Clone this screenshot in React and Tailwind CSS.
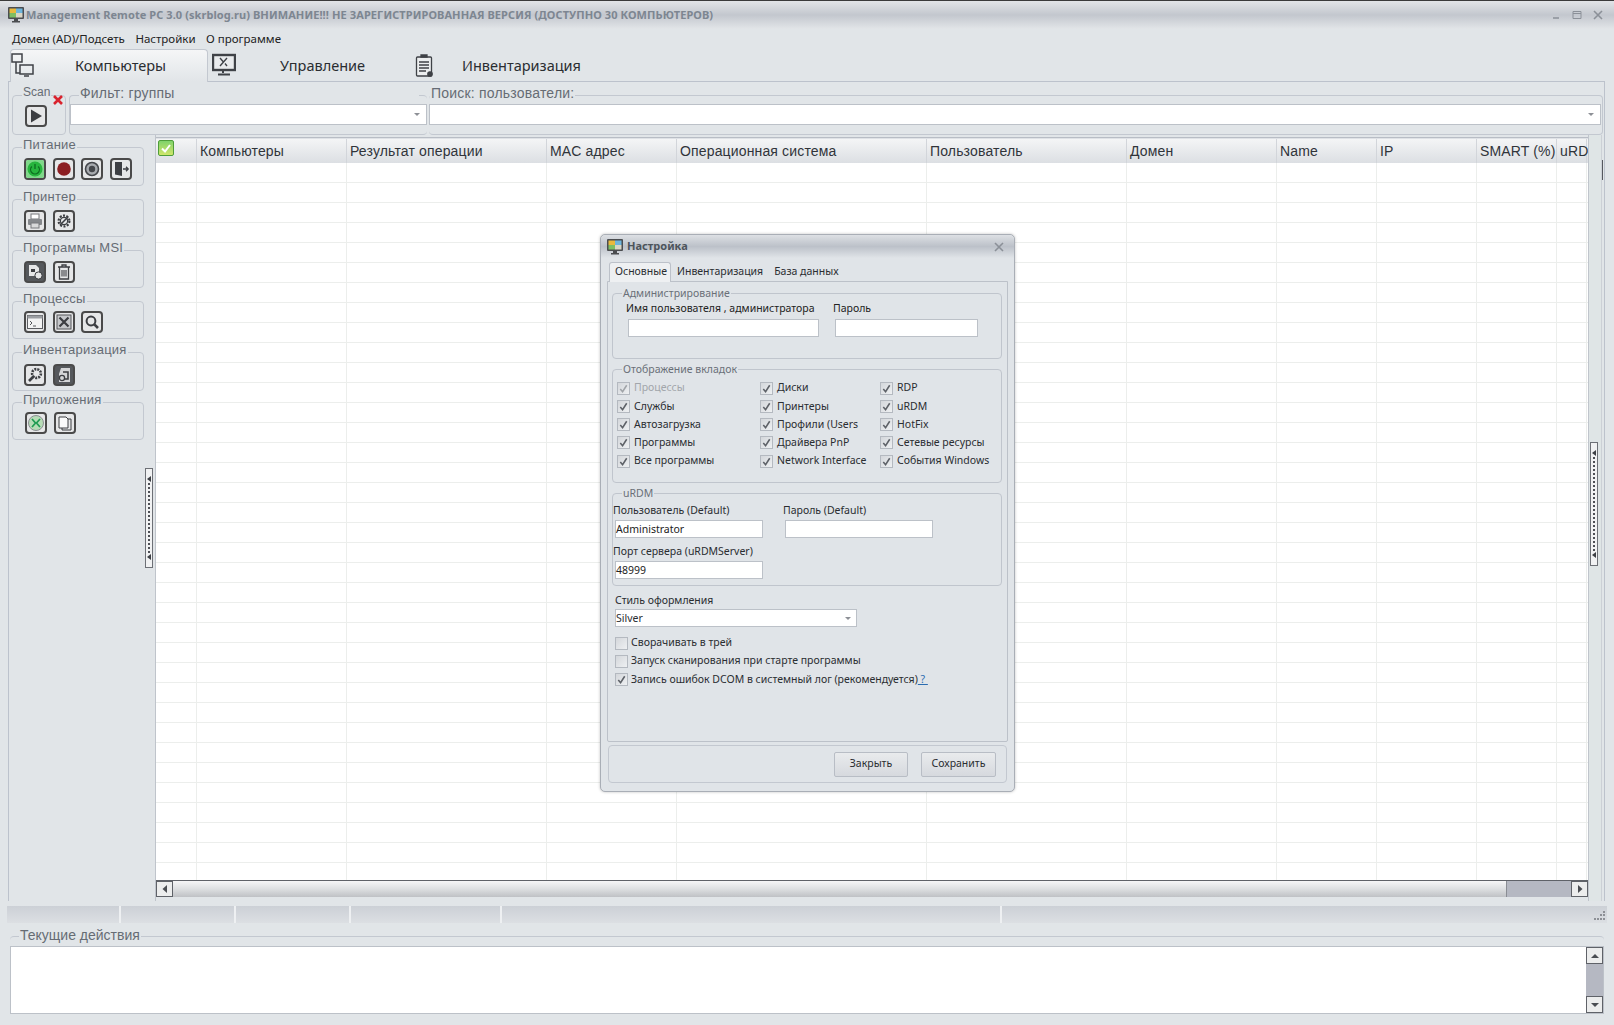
import React from 'react';

const columns = [
  { title: '', width: 'w-[41px]' },
  { title: 'Компьютеры', width: 'w-[150px]' },
  { title: 'Результат операции', width: 'w-[200px]' },
  { title: 'MAC адрес', width: 'w-[130px]' },
  { title: 'Операционная система', width: 'w-[250px]' },
  { title: 'Пользователь', width: 'w-[200px]' },
  { title: 'Домен', width: 'w-[150px]' },
  { title: 'Name', width: 'w-[100px]' },
  { title: 'IP', width: 'w-[100px]' },
  { title: 'SMART (%)', width: 'w-[80px]' },
  { title: 'uRD', width: 'w-[30px]' },
];

const rows = Array.from({ length: 36 }, (_, i) => i);

const tabChecks = [
  ['Процессы', true], ['Диски'], ['RDP'],
  ['Службы'], ['Принтеры'], ['uRDM'],
  ['Автозагрузка'], ['Профили (Users'], ['HotFix'],
  ['Программы'], ['Драйвера PnP'], ['Сетевые ресурсы'],
  ['Все программы'], ['Network Interface'], ['События Windows'],
];

const Group = ({ label, className = '', legendClass = 'text-[14px] tracking-[0.2px] leading-[12px]', children }) => (
  <fieldset className={`min-w-0 rounded-[4px] border border-[#c3c8d0] ${className}`}>
    <legend className={`ml-[9px] px-[1px] h-4 text-[#666c74] font-['Liberation_Sans',sans-serif] ${legendClass}`}>
      {label}
    </legend>
    {children}
  </fieldset>
);

const SideGroup = ({ label, className = '', padding = 'pl-[11px] pt-[3px]', children }) => (
  <Group label={label} className={`shrink-0 ${className}`} legendClass="text-[13px] tracking-[0.25px] leading-[12px]">
    <div className={`flex gap-[6.5px] ${padding}`}>{children}</div>
  </Group>
);

const DialogGroup = ({ label, className = '', children }) => (
  <fieldset className={`min-w-0 rounded-[4px] border border-[#c0c5cd] ${className}`}>
    <legend className="ml-[9px] px-[1px] h-[14px] leading-[14px] text-[10.5px] text-[#6a7078]">{label}</legend>
    {children}
  </fieldset>
);

const ToolButton = ({ children, dark }) => (
  <button className={`w-[22px] h-[22px] shrink-0 rounded-[4px] border-2 border-[#4a4a4a] flex items-center justify-center overflow-hidden ${dark ? 'bg-[#55585c]' : 'bg-[#e6e7e8]'}`}>
    <svg viewBox="0 0 18 18" className="w-[18px] h-[18px]">{children}</svg>
  </button>
);

const Field = ({ value, className = '' }) => (
  <div className={`h-[18px] bg-white border border-[#bcc1c8] text-[10.5px] leading-4 text-[#222] ${className}`}>{value}</div>
);

const Arrow = () => <div className="w-0 h-0 border-x-[3px] border-x-transparent border-t-[3px] border-t-[#8d9096]" />;

const Check = ({ checked = true, disabled }) => (
  <span className="w-[13px] h-[13px] shrink-0 border border-[#b4b9c0] bg-gradient-to-br from-[#d4d7db] to-[#eef0f2] flex items-center justify-center">
    {checked && (
      <svg viewBox="0 0 12 12" className="w-[11px] h-[11px]">
        <path d="M2.5 6.5 L5 9.5 L9.5 2.5" fill="none" stroke={disabled ? '#a0a4a8' : '#5d6167'} strokeWidth="1.7" />
      </svg>
    )}
  </span>
);

const ScrollArrow = ({ d, className = '' }) => (
  <div className={`bg-[#eceded] border border-[#5f6268] flex items-center justify-center shrink-0 ${className}`}>
    <svg viewBox="0 0 10 10" className="w-[10px] h-[10px]"><path d={d} fill="#4a4d52" /></svg>
  </div>
);

const MonitorIcon = () => (
  <svg viewBox="0 0 18 18" className="w-[18px] h-[18px] shrink-0">
    <rect x="1" y="1" width="16" height="12" rx="1" fill="#4b4d50" />
    <rect x="2.5" y="2.5" width="6.5" height="4.5" fill="#e8b93c" />
    <rect x="9" y="2.5" width="6.5" height="4.5" fill="#6fb5dc" />
    <rect x="2.5" y="7" width="6.5" height="4.5" fill="#7fbf62" />
    <rect x="9" y="7" width="6.5" height="4.5" fill="#d9d6c6" />
    <path d="M7 13h4v2h2v1.5H5V15h2z" fill="#4b4d50" />
  </svg>
);

const Splitter = ({ className = '' }) => (
  <div className={`w-2 h-[100px] border border-[#6d7076] bg-[#f1f2f3] flex flex-col items-center justify-between py-[7px] ${className}`}>
    <div className="w-0 h-0 border-y-[3px] border-y-transparent border-r-[4px] border-r-[#3c3f44]" />
    <div className="flex-1 my-[1px] border-l-2 border-dotted border-[#4d4f55]" />
    <div className="w-0 h-0 border-y-[3px] border-y-transparent border-r-[4px] border-r-[#3c3f44]" />
  </div>
);

const SettingsDialog = () => (
  <div className="absolute left-[600px] top-[233px] w-[415px] h-[558px] rounded-[5px] border border-[#a9aeb6] bg-[#e0e4e8] shadow-[0_0_3px_rgba(0,0,0,0.25)] flex flex-col">
    <div className="h-[23px] shrink-0 rounded-t-[5px] bg-gradient-to-b from-[#dde0e4] via-[#bcc1c9] to-[#e0e4e8] flex items-center pl-[5px] pr-[10px] gap-[3px]">
      <MonitorIcon />
      <span className="text-[11px] font-bold text-[#4d545c]">Настройка</span>
      <svg viewBox="0 0 10 10" className="w-[10px] h-[10px] ml-auto">
        <path d="M1 1l8 8M9 1l-8 8" stroke="#8b9098" strokeWidth="1.6" />
      </svg>
    </div>
    <div className="flex items-end pl-[8px] mt-[4px] h-[19px] shrink-0 text-[10.5px] text-[#2a2d31]">
      <span className="h-[20px] w-[62px] -mb-[1px] z-10 pl-[5px] pt-[1px] rounded-t-[3px] border border-b-0 border-[#bcc1c9] bg-[#eef0f2]">Основные</span>
      <span className="ml-[6px] pb-[1px]">Инвентаризация</span>
      <span className="ml-[11px] pb-[1px]">База данных</span>
    </div>
    <div className="mx-[6px] h-[461px] shrink-0 border border-[#bcc1c9] rounded-b-[2px] px-[4px] pt-[4px] flex flex-col text-[10.5px] text-[#2a2d31]">
      <DialogGroup label="Администрирование" className="h-[73px] shrink-0 w-[390px]">
        <div className="flex pl-[13px] h-4 leading-4 text-[#222]">
          <span className="w-[207px]">Имя пользователя , администратора</span>
          <span>Пароль</span>
        </div>
        <div className="flex pl-[15px] mt-[3px]">
          <Field className="w-[191px]" />
          <Field className="w-[143px] ml-[16px]" />
        </div>
      </DialogGroup>
      <DialogGroup label="Отображение вкладок" className="h-[121px] shrink-0 w-[390px] mt-[3px]">
        <div className="grid grid-cols-[143px_120px_1fr] auto-rows-[18.25px] pl-[4px] pt-[3px]">
          {tabChecks.map(([name, disabled]) => (
            <label key={name} className={`flex items-center gap-[4px] ${disabled ? 'text-[#a2a6ab]' : ''}`}>
              <Check disabled={disabled} />
              {name}
            </label>
          ))}
        </div>
      </DialogGroup>
      <DialogGroup label="uRDM" className="h-[100px] shrink-0 w-[390px] mt-[3px]">
        <div className="flex h-4 leading-4 mt-[2px]">
          <span className="w-[170px]">Пользователь (Default)</span>
          <span>Пароль (Default)</span>
        </div>
        <div className="flex pl-[2px] mt-[2px]">
          <Field value="Administrator" className="w-[148px]" />
          <Field className="w-[148px] ml-[22px]" />
        </div>
        <div className="h-4 leading-4 mt-[5px]">Порт сервера (uRDMServer)</div>
        <Field value="48999" className="w-[148px] ml-[2px] mt-[2px]" />
      </DialogGroup>
      <div className="h-4 leading-4 mt-[6px] ml-[3px]">Стиль оформления</div>
      <div className="w-[242px] h-[18px] ml-[3px] mt-[1px] shrink-0 bg-white border border-[#bcc1c8] pr-[5px] flex items-center justify-between leading-4">
        Silver
        <Arrow />
      </div>
      <div className="flex flex-col ml-[3px] mt-[7px]">
        <label className="h-[18px] flex items-center gap-[3px]"><Check checked={false} />Сворачивать в трей</label>
        <label className="h-[18px] flex items-center gap-[3px]"><Check checked={false} />Запуск сканирования при старте программы</label>
        <label className="h-[19px] flex items-center gap-[3px]">
          <Check />
          <span>Запись ошибок DCOM в системный лог (рекомендуется)<span className="text-[#2b6cb0] underline whitespace-pre"> ? </span></span>
        </label>
      </div>
    </div>
    <div className="mx-[7px] mt-[3px] h-[38px] shrink-0 rounded-[4px] border border-[#c3c8d0] flex items-center justify-end gap-[13px] pr-[10px] text-[10.5px] text-[#2a2d31]">
      <button className="w-[74px] h-[25px] rounded-[2px] border border-[#b8bdc5] bg-gradient-to-b from-[#e9ebed] to-[#d6d9de]">Закрыть</button>
      <button className="w-[75px] h-[25px] rounded-[2px] border border-[#b8bdc5] bg-gradient-to-b from-[#e9ebed] to-[#d6d9de]">Сохранить</button>
    </div>
  </div>
);

export default function App() {
  return (
    <div className="relative w-[1614px] h-[1025px] overflow-hidden flex flex-col bg-[#e1e5e8] border-t border-[#3a3a3a] font-['Noto_Sans',sans-serif] text-[#222]">
      {/* title bar */}
      <div className="h-[28px] shrink-0 bg-gradient-to-b from-[#e2e4e7] via-[#c3c7ce] to-[#e2e5e8] flex items-center pl-[7px] pr-[11px]">
        <MonitorIcon />
        <span className="ml-[1px] text-[11px] tracking-[0.08px] font-bold text-[#7d8691] whitespace-nowrap">
          Management Remote PC 3.0 (skrblog.ru) ВНИМАНИЕ!!! НЕ ЗАРЕГИСТРИРОВАННАЯ ВЕРСИЯ (ДОСТУПНО 30 КОМПЬЮТЕРОВ)
        </span>
        <div className="ml-auto flex items-center gap-[11px]">
          <svg viewBox="0 0 10 10" className="w-[10px] h-[10px]"><path d="M2 8h6" stroke="#8b9098" strokeWidth="1.5" /></svg>
          <svg viewBox="0 0 10 10" className="w-[10px] h-[10px]"><path d="M1 1.5h8v7H1zM1 3.5h8" fill="none" stroke="#8b9098" /></svg>
          <svg viewBox="0 0 10 10" className="w-[10px] h-[10px]"><path d="M1 1l8 8M9 1l-8 8" stroke="#8b9098" strokeWidth="1.6" /></svg>
        </div>
      </div>

      {/* menu */}
      <div className="h-[20px] shrink-0 flex items-center pl-[12px] gap-[10.5px] text-[11.5px] text-[#222]">
        <span>Домен (AD)/Подсеть</span>
        <span>Настройки</span>
        <span>О программе</span>
      </div>

      {/* tabs */}
      <div className="h-[32px] shrink-0 flex items-stretch pl-[10px] text-[14.5px] text-[#2a2d31]">
        <div className="w-[198px] -mb-[1px] z-10 rounded-t-[4px] border border-b-0 border-[#c3c8d0] bg-gradient-to-b from-[#f5f6f7] to-[#e1e5e8] flex items-center">
          <svg viewBox="0 0 24 24" className="w-[24px] h-[24px] mb-[2px]" fill="none" stroke="#3f4247" strokeWidth="1.5">
            <rect x="1" y="1" width="10" height="8" />
            <path d="M5 9v11h4" />
            <rect x="9" y="12" width="13" height="9" />
            <path d="M13 23h5" />
          </svg>
          <span className="ml-[40px] mb-[1px]">Компьютеры</span>
        </div>
        <div className="flex items-center pl-[4px] w-[203px]">
          <svg viewBox="0 0 24 24" className="w-[24px] h-[24px]" fill="none" stroke="#3f4247" strokeWidth="1.6">
            <rect x="1" y="2" width="22" height="15" fill="#e9ebed" strokeWidth="2.4" />
            <path d="M8 5l3 3.5M13 10.5l2 2.5M15 5l-7 8" strokeWidth="1.4" />
            <path d="M11 17v3M6 21.5h12" strokeWidth="2" />
          </svg>
          <span className="ml-[44px] mt-[1px]">Управление</span>
        </div>
        <div className="flex items-center pl-[4px]">
          <svg viewBox="0 0 18 24" className="w-[18px] h-[24px]" fill="none" stroke="#3f4247" strokeWidth="1.3">
            <rect x="1.5" y="4" width="15" height="19" rx="1" fill="#eceeef" />
            <path d="M6 4V2h6v2z" fill="#3f4247" />
            <path d="M4 9h10M4 12h10M4 15h10M4 18h7" />
            <circle cx="15" cy="21" r="2.2" fill="#3f4247" />
          </svg>
          <span className="ml-[29px] mt-[1px]">Инвентаризация</span>
        </div>
      </div>

      {/* page pane */}
      <div className="ml-[8px] w-[1597px] h-[820px] shrink-0 border border-b-0 border-[#bcc2cc] flex flex-col">
        <div className="h-[53px] shrink-0 flex pl-[3px] pr-[1px] pt-[5px] gap-[3px]">
          <Group label="Scan" legendClass="text-[12px] leading-[10px]" className="relative w-[54px] h-[48px] shrink-0">
            <div className="pl-[12px] pt-[2px]">
              <ToolButton>
                <path d="M4 2.5L15 9L4 15.5z" fill="#3c3e42" />
              </ToolButton>
            </div>
            <svg viewBox="0 0 12 12" className="absolute right-[1px] -top-[9px] w-[12px] h-[12px]">
              <path d="M2 2l8 8M10 2l-8 8" stroke="#d9232e" strokeWidth="2.6" />
            </svg>
          </Group>
          <Group label="Фильт: группы" className="w-[358px] h-[48px] shrink-0 border-r-0" legendClass="w-[340px] text-[14px] tracking-[0.2px] leading-[12px]">
            <div className="h-[21px] mt-[1px] bg-white border border-[#bcc1c8] flex items-center justify-end pr-[6px]">
              <Arrow />
            </div>
          </Group>
          <Group label="Поиск: пользователи:" className="flex-1 h-[48px] border-l-0 -ml-[1px]" legendClass="ml-[1px]! text-[14px] tracking-[0.2px] leading-[12px]">
            <div className="h-[21px] mt-[1px] mr-[1px] bg-white border border-[#bcc1c8] flex items-center justify-end pr-[6px]">
              <Arrow />
            </div>
          </Group>
        </div>

        <div className="flex-1 flex min-h-0">
          {/* left panel */}
          <div className="w-[147px] shrink-0 flex border-r border-[#bfc4cb]">
            <div className="w-[135px] shrink-0 flex flex-col pl-[3px] pt-[4px] gap-[5px]">
              <SideGroup label="Питание" className="h-[47px]">
                <ToolButton>
                  <rect width="18" height="18" fill="#7fd88a" />
                  <circle cx="9" cy="9" r="7.5" fill="#27b53e" />
                  <path d="M5.8 6.5a4.4 4.4 0 1 0 6.4 0M9 4v5" fill="none" stroke="#0d6d20" strokeWidth="1.3" />
                </ToolButton>
                <ToolButton>
                  <circle cx="9" cy="9" r="6.8" fill="#8c1e22" />
                </ToolButton>
                <ToolButton>
                  <circle cx="9" cy="9" r="6.5" fill="#a8abaf" stroke="#45474b" strokeWidth="1.6" />
                  <circle cx="9" cy="9" r="3.2" fill="#45474b" />
                </ToolButton>
                <ToolButton>
                  <path d="M3 2h7v14l-7-1.5z" fill="#3d3f43" />
                  <path d="M11 9h5M14 6.8L16.2 9 14 11.2" fill="none" stroke="#3d3f43" strokeWidth="1.3" />
                </ToolButton>
              </SideGroup>
              <SideGroup label="Принтер" className="h-[46px]">
                <ToolButton>
                  <rect x="5" y="2" width="8" height="5" fill="#fff" stroke="#77797d" />
                  <rect x="2" y="7" width="14" height="6" rx="1" fill="#85888c" />
                  <rect x="5" y="11" width="8" height="5" fill="#d8d9da" stroke="#77797d" />
                </ToolButton>
                <ToolButton>
                  <circle cx="9" cy="9" r="5.4" fill="none" stroke="#3c3e42" strokeWidth="2.2" strokeDasharray="2 1.4" />
                  <circle cx="9" cy="9" r="3.6" fill="none" stroke="#3c3e42" strokeWidth="1.2" />
                  <path d="M5 13L13 5" stroke="#3c3e42" strokeWidth="1.6" />
                </ToolButton>
              </SideGroup>
              <SideGroup label="Программы MSI" className="h-[46px]">
                <ToolButton dark>
                  <path d="M3 2h7l3 3v8H3z" fill="#e6e7e8" />
                  <rect x="5" y="6" width="4" height="3" fill="#3c3e42" />
                  <circle cx="12.5" cy="12.5" r="3.6" fill="#e6e7e8" stroke="#3c3e42" />
                </ToolButton>
                <ToolButton>
                  <path d="M3 4h12M7 4V2h4v2M4.5 4v12h9V4" fill="none" stroke="#3c3e42" strokeWidth="1.3" />
                  <path d="M7 7v6.5M9 7v6.5M11 7v6.5" stroke="#3c3e42" strokeWidth="1.1" />
                </ToolButton>
              </SideGroup>
              <SideGroup label="Процессы" className="h-[46px]" padding="pl-[11px] pt-[2px]">
                <ToolButton>
                  <rect x="1.5" y="2.5" width="15" height="13" fill="#f2f3f3" stroke="#5b5d61" />
                  <rect x="1.5" y="2.5" width="15" height="3" fill="#9b9ea2" />
                  <path d="M4 8l2 2-2 2M7 13h3" fill="none" stroke="#55575b" />
                </ToolButton>
                <ToolButton>
                  <rect x="2" y="2" width="14" height="14" fill="#c6c8cb" stroke="#55575b" />
                  <path d="M4.5 4.5l9 9M13.5 4.5l-9 9" stroke="#3c3e42" strokeWidth="2.2" />
                </ToolButton>
                <ToolButton>
                  <circle cx="8" cy="8" r="4.4" fill="none" stroke="#3c3e42" strokeWidth="2" />
                  <path d="M11.3 11.3L15 15" stroke="#3c3e42" strokeWidth="2.6" />
                </ToolButton>
              </SideGroup>
              <SideGroup label="Инвентаризация" className="h-[47px]" padding="pl-[11px] pt-[4px]">
                <ToolButton>
                  <circle cx="10.5" cy="7.5" r="4.4" fill="none" stroke="#3c3e42" strokeWidth="2.6" strokeDasharray="2 1" />
                  <path d="M8 10l-5 5" stroke="#3c3e42" strokeWidth="2.6" />
                </ToolButton>
                <ToolButton dark>
                  <path d="M6 2h9v14H4V8z" fill="#d4d5d7" />
                  <circle cx="7" cy="12" r="2.6" fill="none" stroke="#3c3e42" strokeWidth="1.3" />
                  <path d="M8 6h5v7h-3" fill="none" stroke="#3c3e42" strokeWidth="1.6" />
                </ToolButton>
              </SideGroup>
              <SideGroup label="Приложения" className="h-[46px] -mt-[2px]" padding="pl-[12px] pt-[2px]">
                <ToolButton>
                  <circle cx="9" cy="9" r="7.5" fill="#b6dcb6" stroke="#8a8d91" />
                  <path d="M5 5l3.5 4L5 13M13 5L9.5 9l3.5 4" fill="none" stroke="#1f9b52" strokeWidth="1.7" />
                </ToolButton>
                <ToolButton>
                  <path d="M3 3h7l2 2v9H3z" fill="#fafafa" stroke="#3c3e42" />
                  <path d="M12 5h3v11H6v-2" fill="none" stroke="#3c3e42" />
                </ToolButton>
              </SideGroup>
            </div>
            <div className="pl-[1px] pt-[333px]">
              <Splitter />
            </div>
          </div>

          {/* computers table */}
          <div className="w-[1432px] shrink-0 mt-[2px] h-[760px] border-t border-[#b8bdc5] flex flex-col bg-white">
            <div className="h-[25px] shrink-0 flex bg-gradient-to-b from-[#f4f5f6] to-[#dcdfe3] border-t border-[#dfe2e6] font-['Liberation_Sans',sans-serif] text-[14px] tracking-[0.15px] text-[#30343a]">
              {columns.map((col, i) => (
                <div key={i} className={`${col.width} shrink-0 border-r border-[#d2d5da] pt-[2px] whitespace-nowrap ${i === 0 ? 'pl-[2px]' : 'pl-[3px]'}`}>
                  {i === 0 ? (
                    <span className="w-[16px] h-[16px] -mt-[1px] rounded-[2px] border border-[#4f9d3a] bg-gradient-to-b from-[#7fd26a] to-[#cfe66b] flex items-center justify-center">
                      <svg viewBox="0 0 12 12" className="w-[12px] h-[12px]"><path d="M2 6.5L5 9.5 10 3" fill="none" stroke="#fff" strokeWidth="2" /></svg>
                    </span>
                  ) : col.title}
                </div>
              ))}
            </div>
            <div className="flex-1 min-h-0 overflow-hidden">
              {rows.map((row) => (
                <div key={row} className="flex h-[20px] border-b border-[#eceeec]">
                  {columns.map((col, i) => (
                    <div key={i} className={`${col.width} shrink-0 border-r border-[#eceeec]`} />
                  ))}
                </div>
              ))}
            </div>
            <div className="h-[17px] shrink-0 flex border-t border-[#5f6268] bg-[#b5b8c2]">
              <ScrollArrow d="M7 1v8L2.5 5z" className="w-[17px]" />
              <div className="w-[1334px] border-r border-[#8a8d94] bg-gradient-to-b from-[#f6f6f7] via-[#dddfe1] to-[#bfc1c5]" />
              <div className="flex-1" />
              <ScrollArrow d="M3 1v8l4.5-4z" className="w-[17px]" />
            </div>
          </div>

          {/* right edge */}
          <div className="w-[13px] shrink-0 bg-[#dfe5e6] border-l border-[#c0c5cc] pl-[1px] pt-[307px]">
            <Splitter className="h-[124px]" />
          </div>
          <div className="flex-1 border-l border-[#ccd0d6] pt-[25px]">
            <div className="w-[1px] h-[20px] bg-[#55585e]" />
          </div>
        </div>
      </div>

      {/* status bar */}
      <div className="h-[17px] shrink-0 mt-[5px] mx-[7px] flex bg-gradient-to-b from-[#ccd0d6] to-[#dcdfe3]">
        <div className="w-[114px] border-r-2 border-[#eef0f2]" />
        <div className="w-[115px] border-r-2 border-[#eef0f2]" />
        <div className="w-[115px] border-r-2 border-[#eef0f2]" />
        <div className="w-[151px] border-r-2 border-[#eef0f2]" />
        <div className="w-[500px] border-r-2 border-[#eef0f2]" />
        <div className="flex-1 flex justify-end items-end pr-[1px] pb-[1px]">
          <svg viewBox="0 0 12 12" className="w-[12px] h-[12px]" fill="#8d9096">
            <rect x="9" y="1" width="2" height="2" /><rect x="6" y="4" width="2" height="2" /><rect x="9" y="4" width="2" height="2" />
            <rect x="3" y="8" width="2" height="2" /><rect x="6" y="8" width="2" height="2" /><rect x="9" y="8" width="2" height="2" />
            <rect x="0" y="8" width="2" height="2" />
          </svg>
        </div>
      </div>

      {/* log */}
      <Group label="Текущие действия" legendClass="text-[14px] leading-[14px]" className="mx-[10px] mt-[5px] h-[90px] shrink-0 border-b-0 border-x-0 w-[1594px]">
        <div className="h-[68px] mt-[2px] flex bg-white border border-[#bcc1c8]">
          <div className="flex-1" />
          <div className="w-[17px] flex flex-col justify-between bg-[#b5b8c2]">
            <ScrollArrow d="M1 7h8L5 3z" className="h-[17px]" />
            <ScrollArrow d="M1 3h8L5 7z" className="h-[17px]" />
          </div>
        </div>
      </Group>

      <SettingsDialog />
    </div>
  );
}
